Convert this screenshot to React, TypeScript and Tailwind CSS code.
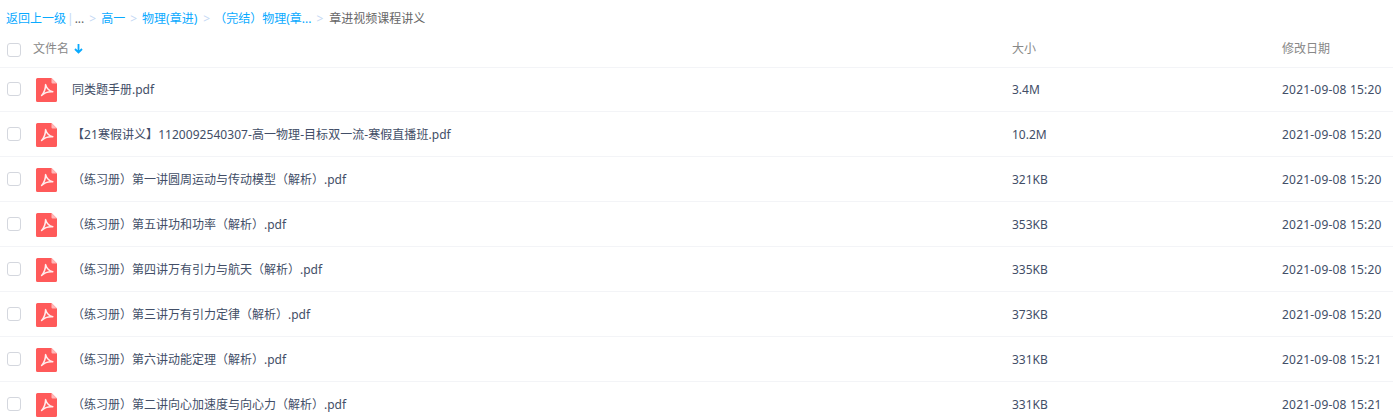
const rows = [
  ["同类题手册.pdf", "3.4M", "2021-09-08 15:20"],
  ["【21寒假讲义】1120092540307-高一物理-目标双一流-寒假直播班.pdf", "10.2M", "2021-09-08 15:20"],
  ["（练习册）第一讲圆周运动与传动模型（解析）.pdf", "321KB", "2021-09-08 15:20"],
  ["（练习册）第五讲功和功率（解析）.pdf", "353KB", "2021-09-08 15:20"],
  ["（练习册）第四讲万有引力与航天（解析）.pdf", "335KB", "2021-09-08 15:20"],
  ["（练习册）第三讲万有引力定律（解析）.pdf", "373KB", "2021-09-08 15:20"],
  ["（练习册）第六讲动能定理（解析）.pdf", "331KB", "2021-09-08 15:21"],
  ["（练习册）第二讲向心加速度与向心力（解析）.pdf", "331KB", "2021-09-08 15:21"],
];

function Check() {
  return <span className="block w-[14px] h-[14px] rounded-[3px] border border-[#d4d7de] bg-white shrink-0" />;
}

function PdfIcon() {
  return (
    <svg width="21" height="24" viewBox="0 0 21 24" className="block shrink-0">
      <path d="M1.5 0H15.5L21 5.5V22.5A1.5 1.5 0 0 1 19.5 24H1.5A1.5 1.5 0 0 1 0 22.5V1.5A1.5 1.5 0 0 1 1.5 0Z" fill="#ff5a5a" />
      <path d="M15.5 0L21 5.5H16.5a1 1 0 0 1-1-1Z" fill="#ffb8b8" />
      <path d="M9.6 6.6C9.6 10.5 8.2 14.6 5.6 17.4C8.2 15 12 13.4 16.8 13.8C12.9 12.8 10.6 10.2 9.6 6.6Z" fill="none" stroke="#ffeeee" strokeWidth="1.5" strokeLinejoin="round" />
    </svg>
  );
}

const Sep = () => <span className="text-[#c4d8f4] mx-[5px]">&gt;</span>;

export default function App() {
  return (
    <div className="w-[1393px] h-[420px] overflow-hidden bg-white text-[12px] text-[#424e67] font-['Microsoft_YaHei','Noto_Sans','Noto_Sans_CJK_SC',sans-serif]">
      <div className="h-[30px] pl-[6px] pt-[8px] flex items-center leading-[20px] whitespace-nowrap">
        <span className="text-[#09aaff]">返回上一级</span>
        <span className="text-[#c4d8f4] mx-[1px]">|</span>
        <span className="text-[#666]">...</span>
        <Sep />
        <span className="text-[#09aaff]">高一</span>
        <Sep />
        <span className="text-[#09aaff]">物理(章进)</span>
        <span className="text-[#c4d8f4] ml-[6px] mr-[4px]">&gt;</span>
        <span className="text-[#09aaff]">（完结）物理(章...</span>
        <span className="text-[#c4d8f4] ml-[5px] mr-[6px]">&gt;</span>
        <span className="text-[#666]">章进视频课程讲义</span>
      </div>
      <div className="h-[37px] flex items-center text-[#888]">
        <div className="w-[33px] pl-[7px] mt-[3px]"><Check /></div>
        <div className="w-[979px] flex items-center gap-[5px]">
          文件名
          <svg width="9" height="11" viewBox="0 0 9 11">
            <path d="M4.5 1V9.5M1 6l3.5 3.5L8 6" fill="none" stroke="#09aaff" strokeWidth="1.8" />
          </svg>
        </div>
        <div className="w-[270px]">大小</div>
        <div>修改日期</div>
      </div>
      {rows.map(([name, size, date], i) => (
        <div key={name} className={i === 0 ? "h-[45px] flex items-center border-b border-[#f3f4f7] shadow-[inset_0_1px_0_#f3f4f7]" : "h-[45px] flex items-center border-b border-[#f3f4f7]"}>
          <div className="w-[33px] pl-[7px]"><Check /></div>
          <div className="w-[979px] flex items-center">
            <span className="ml-[3px] mr-[15px] mt-[2px]"><PdfIcon /></span>
            <span className={i === 1 ? "mt-[2px] whitespace-nowrap tracking-[0.05px]" : "mt-[2px] whitespace-nowrap"}>{name}</span>
          </div>
          <div className="w-[270px] mt-[2px]">{size}</div>
          <div className="mt-[2px] whitespace-nowrap tracking-[0.2px]">{date}</div>
        </div>
      ))}
    </div>
  );
}
